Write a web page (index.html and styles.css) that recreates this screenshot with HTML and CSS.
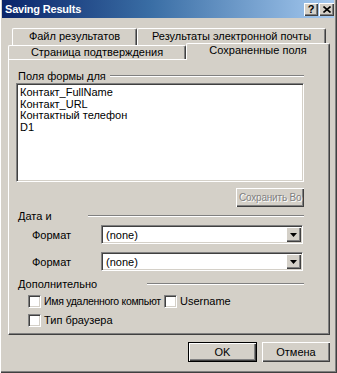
FILE: index.html
```html
<!DOCTYPE html>
<html>
<head>
<meta charset="utf-8">
<link rel="stylesheet" href="styles.css">
</head>
<body>
<div class="window">
  <div class="titlebar">
    <span class="title">Saving Results</span>
    <div class="caption-btns">
      <span class="cbtn help">?</span>
      <span class="cbtn close"><svg width="8" height="7" viewBox="0 0 8 7"><path d="M0.5 0.5 L7.5 6.5 M7.5 0.5 L0.5 6.5" stroke="#000" stroke-width="1.6" fill="none"/></svg></span>
    </div>
  </div>
  <div class="tabs">
    <div class="tabrow row1">
      <div class="tab t1">Файл результатов</div>
      <div class="tab t2">Результаты электронной почты</div>
    </div>
    <div class="tabrow row2">
      <div class="tab t3">Страница подтверждения</div>
      <div class="tab t4 sel">Сохраненные поля</div>
    </div>
  </div>
  <div class="panel">
    <div class="ghead"><span class="glabel">Поля формы для</span><span class="gline l1"></span></div>
    <div class="listbox">
      <div class="item">Контакт_FullName</div>
      <div class="item">Контакт_URL</div>
      <div class="item">Контактный телефон</div>
      <div class="item">D1</div>
    </div>
    <div class="saverow"><button class="btn disabled save">Сохранить Во</button></div>
    <div class="ghead date"><span class="glabel">Дата и</span><span class="gline l2"></span></div>
    <div class="crow c1"><span class="clabel">Формат</span><div class="combo"><span class="ctext">(none)</span><span class="cdrop"><svg width="7" height="4" viewBox="0 0 7 4"><path d="M0 0 H7 L3.5 4 Z" fill="#000"/></svg></span></div></div>
    <div class="crow c2"><span class="clabel">Формат</span><div class="combo"><span class="ctext">(none)</span><span class="cdrop"><svg width="7" height="4" viewBox="0 0 7 4"><path d="M0 0 H7 L3.5 4 Z" fill="#000"/></svg></span></div></div>
    <div class="ghead extra"><span class="glabel">Дополнительно</span><span class="gline l3"></span></div>
    <div class="chkrow r1">
      <label class="chk wide"><span class="box"></span><span class="ctxt">Имя удаленного компьют</span></label>
      <label class="chk"><span class="box"></span><span>Username</span></label>
    </div>
    <div class="chkrow r2">
      <label class="chk"><span class="box"></span><span>Тип браузера</span></label>
    </div>
  </div>
  <div class="buttons">
    <button class="btn default ok">OK</button>
    <button class="btn cancel">Отмена</button>
  </div>
</div>
</body>
</html>
```
FILE: styles.css
```css
html, body {
  margin: 0;
  padding: 0;
  background: #d4d0c8;
}
body {
  font-family: "Liberation Sans", Arial, sans-serif;
  font-size: 11px;
  color: #000;
}
.window {
  width: 337px;
  height: 373px;
  box-sizing: border-box;
  background: #d4d0c8;
  box-shadow: inset 1px 0 #fff, inset -1px -1px #404040, inset -2px -2px #808080;
  display: flex;
  flex-direction: column;
  overflow: hidden;
}
.titlebar {
  height: 18px;
  margin: 0 3px 0 2px;
  background: linear-gradient(to right, #0a246a 0%, #3a6ea5 45%, #a6caf0 100%);
  display: flex;
  align-items: center;
  justify-content: space-between;
}
.title {
  color: #fff;
  font-weight: bold;
  font-size: 11px;
  margin-left: 3px;
  letter-spacing: -0.2px;
}
.caption-btns {
  display: flex;
  gap: 1px;
}
.cbtn {
  width: 14px;
  height: 13px;
  background: #d4d0c8;
  box-shadow: inset 1px 1px #fff, inset -1px -1px #404040, inset -2px -2px #808080;
  display: flex;
  align-items: center;
  justify-content: center;
  font-weight: bold;
  font-size: 11px;
  line-height: 13px;
}
.cbtn.close { width: 15px; }
.tabs {
  margin-top: 10px;
  display: flex;
  flex-direction: column;
}
.tabrow {
  display: flex;
  align-items: flex-start;
}
.row1 {
  height: 17px;
  margin-left: 12px;
}
.row2 {
  height: 14px;
  margin-left: 8px;
}
.tab {
  box-sizing: border-box;
  background: #d4d0c8;
  border-top: 1px solid #fff;
  border-left: 1px solid #fff;
  border-right: 1px solid #404040;
  border-radius: 2px 2px 0 0;
  box-shadow: inset -1px 0 #808080;
  text-align: center;
  white-space: nowrap;
  overflow: hidden;
}
.row1 .tab {
  height: 17px;
  line-height: 15px;
}
.t1 { width: 125px; }
.t2 { width: 189px; }
.row2 .tab {
  height: 14px;
  line-height: 13px;
}
.t3 { width: 178px; }
.row2 .tab.sel {
  width: 144px;
  height: 17px;
  margin-top: -2px;
  line-height: 13px;
  position: relative;
  z-index: 1;
}
.panel {
  margin-left: 8px;
  width: 322px;
  height: 276px;
  box-sizing: border-box;
  border-top: 1px solid #fff;
  border-left: 1px solid #fff;
  border-right: 1px solid #404040;
  border-bottom: 1px solid #404040;
  box-shadow: inset -1px -1px #808080;
  padding: 9px 25px 0 7px;
  display: flex;
  flex-direction: column;
}
.ghead {
  display: flex;
  align-items: center;
  height: 13px;
}
.glabel {
  margin-left: 2px;
  white-space: nowrap;
}
.gline {
  flex: 1;
  height: 0;
  border-top: 1px solid #808080;
  border-bottom: 1px solid #fff;
}
.l1 { margin-left: 4px; }
.l2 { margin-left: 36px; }
.l3 { margin-left: 50px; }
.listbox {
  margin-top: 1px;
  height: 99px;
  box-sizing: border-box;
  background: #fff;
  border-top: 1px solid #808080;
  border-left: 1px solid #808080;
  border-right: 1px solid #fff;
  border-bottom: 1px solid #fff;
  box-shadow: inset 1px 1px #404040, inset -1px -1px #d4d0c8;
  padding: 3px 2px 0 3px;
}
.item {
  line-height: 11.5px;
  white-space: nowrap;
}
.saverow {
  display: flex;
  justify-content: flex-end;
  margin-top: 6px;
}
.btn {
  font-family: "Liberation Sans", Arial, sans-serif;
  font-size: 11px;
  color: #000;
  background: #d4d0c8;
  border: none;
  padding: 0;
  margin: 0;
  box-sizing: border-box;
  box-shadow: inset 1px 1px #fff, inset -1px -1px #404040, inset -2px -2px #808080;
  white-space: nowrap;
  overflow: hidden;
}
.save {
  width: 68px;
  height: 19px;
  font-size: 10px;
  letter-spacing: -0.2px;
  padding: 0 2px 0 3px;
  text-align: left;
}
.disabled {
  color: #808080;
  text-shadow: 1px 1px #fff;
}
.date { margin-top: 2px; }
.crow {
  display: flex;
  align-items: center;
  padding-left: 16px;
}
.c1 { margin-top: 3px; }
.c2 { margin-top: 8px; }
.clabel {
  width: 69px;
}
.combo {
  width: 202px;
  height: 19px;
  box-sizing: border-box;
  background: #fff;
  border-top: 1px solid #808080;
  border-left: 1px solid #808080;
  border-right: 1px solid #fff;
  border-bottom: 1px solid #fff;
  box-shadow: inset 1px 1px #404040, inset -1px -1px #d4d0c8;
  display: flex;
  align-items: center;
  justify-content: space-between;
  padding: 1px;
}
.ctext {
  margin-left: 3px;
}
.cdrop {
  width: 15px;
  height: 15px;
  background: #d4d0c8;
  box-shadow: inset 1px 1px #fff, inset -1px -1px #404040, inset -2px -2px #808080;
  display: flex;
  align-items: center;
  justify-content: center;
}
.extra { margin-top: 6px; }
.chkrow {
  display: flex;
  align-items: center;
  padding-left: 12px;
  height: 14px;
}
.r1 { margin-top: 4px; }
.r2 { margin-top: 5px; }
.chk {
  display: flex;
  align-items: center;
  gap: 3px;
  white-space: nowrap;
}
.chk.wide { width: 136px; }
.ctxt {
  font-size: 10.5px;
  letter-spacing: -0.3px;
}
.box {
  width: 13px;
  height: 13px;
  box-sizing: border-box;
  background: #fff;
  border-top: 1px solid #808080;
  border-left: 1px solid #808080;
  border-right: 1px solid #fff;
  border-bottom: 1px solid #fff;
  box-shadow: inset 1px 1px #404040, inset -1px -1px #d4d0c8;
  flex: none;
}
.buttons {
  display: flex;
  justify-content: flex-end;
  gap: 5px;
  margin-top: 7px;
  padding-right: 7px;
}
.ok {
  width: 69px;
  height: 20px;
}
.default {
  border: 1px solid #000;
}
.cancel {
  width: 68px;
  height: 20px;
}
```
